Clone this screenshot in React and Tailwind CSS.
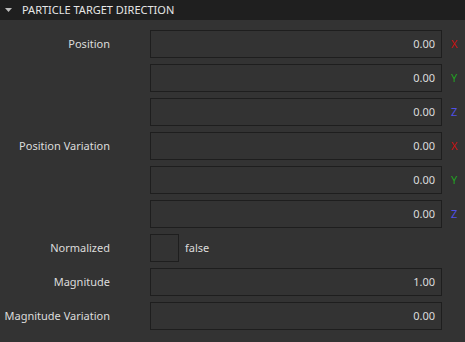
const FONT = { fontFamily: '"Noto Sans", "Open Sans", sans-serif' };

const AXIS_COLORS = {
  X: 'text-[#cc1111]',
  Y: 'text-[#22a022]',
  Z: 'text-[#5050e6]',
};

const Caret = () => (
  <svg width="7" height="4" viewBox="0 0 7 4" className="shrink-0">
    <path d="M0 0h7L3.5 4z" fill="#bdbdbd" />
  </svg>
);

function Row({ label, children }) {
  return (
    <div className="flex items-center h-[28px]">
      <div className="w-[110px] shrink-0 text-right text-[11px] text-[#dcdcdc] whitespace-nowrap">{label}</div>
      <div className="ml-[40px] flex-1 flex items-center">{children}</div>
    </div>
  );
}

function NumberField({ value, axis }) {
  return (
    <>
      <div className="w-[292px] h-[28px] border border-[#1e1e1e] bg-[#333333] flex items-center justify-end pr-[6px] text-[11px] text-[#dcdcdc]">
        {value}
      </div>
      {axis && (
        <span className={`ml-[9px] text-[11px] ${AXIS_COLORS[axis]}`}>{axis}</span>
      )}
    </>
  );
}

export default function App() {
  return (
    <div className="w-[465px] h-[342px] bg-[#333333] overflow-hidden" style={FONT}>
      <div className="h-[20px] bg-[#1f1f1f] flex items-center pl-[5px] gap-[10px]">
        <Caret />
        <span className="text-[11px] text-[#e6e6e6] uppercase">Particle Target Direction</span>
      </div>

      <div className="flex flex-col gap-[6px] pt-[10px]">
        <Row label="Position"><NumberField value="0.00" axis="X" /></Row>
        <Row><NumberField value="0.00" axis="Y" /></Row>
        <Row><NumberField value="0.00" axis="Z" /></Row>
        <Row label="Position Variation"><NumberField value="0.00" axis="X" /></Row>
        <Row><NumberField value="0.00" axis="Y" /></Row>
        <Row><NumberField value="0.00" axis="Z" /></Row>
        <Row label="Normalized">
          <div className="w-[29px] h-[28px] border border-[#1e1e1e] bg-[#333333]" />
          <span className="ml-[6px] text-[11px] text-[#dcdcdc]">false</span>
        </Row>
        <Row label="Magnitude"><NumberField value="1.00" /></Row>
        <Row label="Magnitude Variation"><NumberField value="0.00" /></Row>
      </div>
    </div>
  );
}
